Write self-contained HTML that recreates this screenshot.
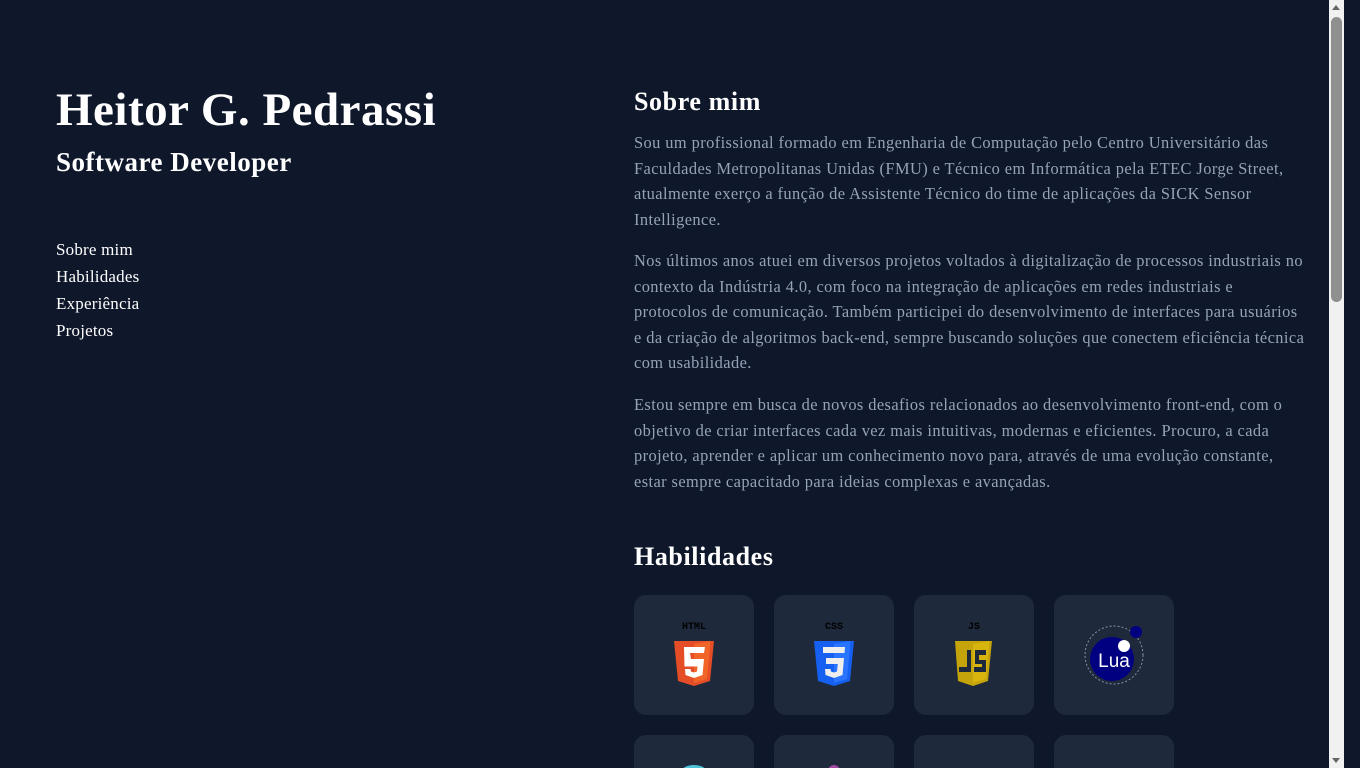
<!DOCTYPE html>
<html><head><meta charset="utf-8"><style>
html,body{margin:0;padding:0;background:#0f172a;overflow:hidden;width:1360px;height:768px}
body{position:relative;font-family:"Liberation Serif",serif;color:#fff}
.a{position:absolute;white-space:nowrap}
h1{position:absolute;left:56px;top:83px;margin:0;font-size:47px;font-weight:bold;letter-spacing:0.5px;white-space:nowrap}
.sub{left:56px;top:147px;font-size:27px;font-weight:bold;letter-spacing:0.5px}
.nav{left:56px;font-size:17px;letter-spacing:0.2px}
.p{left:634px;font-size:16.4px;line-height:25.6px;color:#94a3b8;letter-spacing:0.42px}
.h{left:634px;font-size:26px;font-weight:bold;letter-spacing:0.6px}
.card{position:absolute;width:120px;height:120px;background:#1e293b;border-radius:12px;overflow:hidden}
.sb{position:absolute;left:1329px;top:0;width:15px;height:768px;background:#f1f1f1}
</style></head><body>
<h1>Heitor G. Pedrassi</h1>
<div class="a sub">Software Developer</div>
<div class="a nav" style="top:240px">Sobre mim</div>
<div class="a nav" style="top:267px">Habilidades</div>
<div class="a nav" style="top:294px">Experiência</div>
<div class="a nav" style="top:321px">Projetos</div>

<div class="a h" style="top:87px">Sobre mim</div>
<div class="a p" style="top:130px">Sou um profissional formado em Engenharia de Computação pelo Centro Universitário das<br>Faculdades Metropolitanas Unidas (FMU) e Técnico em Informática pela ETEC Jorge Street,<br>atualmente exerço a função de Assistente Técnico do time de aplicações da SICK Sensor<br>Intelligence.</div>
<div class="a p" style="top:248px">Nos últimos anos atuei em diversos projetos voltados à digitalização de processos industriais no<br>contexto da Indústria 4.0, com foco na integração de aplicações em redes industriais e<br>protocolos de comunicação. Também participei do desenvolvimento de interfaces para usuários<br>e da criação de algoritmos back-end, sempre buscando soluções que conectem eficiência técnica<br>com usabilidade.</div>
<div class="a p" style="top:392px">Estou sempre em busca de novos desafios relacionados ao desenvolvimento front-end, com o<br>objetivo de criar interfaces cada vez mais intuitivas, modernas e eficientes. Procuro, a cada<br>projeto, aprender e aplicar um conhecimento novo para, através de uma evolução constante,<br>estar sempre capacitado para ideias complexas e avançadas.</div>
<div class="a h" style="top:542px">Habilidades</div>

<div class="card" style="left:634px;top:595px"><svg width="120" height="120"><text x="60" y="34" font-size="10" font-weight="bold" text-anchor="middle" font-family="Liberation Mono" fill="#000">HTML</text><path d="M40 46h40l-4 40-16 5-16-5z" fill="#e44d26"/><path d="M60 49v39l13-4 3.5-38z" fill="#f16529"/><path d="M50 52h21l-1 6h-14l1 6h13l-1.5 16-8.5 3-8.5-3-.5-6h5.5l.5 2.5 3 1 3-1 .5-5h-13z" fill="#fff"/></svg></div>
<div class="card" style="left:774px;top:595px"><svg width="120" height="120"><text x="60" y="34" font-size="10" font-weight="bold" text-anchor="middle" font-family="Liberation Mono" fill="#000">CSS</text><path d="M40 46h40l-4 40-16 5-16-5z" fill="#1560f0"/><path d="M60 49v39l13-4 3.5-38z" fill="#2a75ff"/><path d="M49 52h22l-.5 6H49zM52 63h18l-.5 6H52zM69.5 69l-1 11-8.5 3-8.5-3-.5-6h5.5l.5 2.5 3 1 3-1 .8-7.5z" fill="#eee"/></svg></div>
<div class="card" style="left:914px;top:595px"><svg width="120" height="120"><text x="60" y="34" font-size="10" font-weight="bold" text-anchor="middle" font-family="Liberation Mono" fill="#000">JS</text><path d="M41 46h37l-4 40-15 5-15-5z" fill="#c4a30b"/><path d="M59 49v39l13-4 3.5-38z" fill="#d7b50e"/><path d="M53 55h4v22h-12v-5h8zM61 55h11v5h-7v5h7v12h-12v-5h8v-3h-7z" fill="#1e293b"/></svg></div>
<div class="card" style="left:1054px;top:595px"><svg width="120" height="120"><circle cx="60" cy="60" r="29" fill="none" stroke="#8a8fa0" stroke-dasharray="2 2"/><circle cx="58" cy="64" r="22" fill="#000080"/><circle cx="82" cy="37" r="6" fill="#000080"/><circle cx="70" cy="51" r="6" fill="#fff"/><text x="60" y="72" font-size="19" text-anchor="middle" font-family="Liberation Sans" fill="#fff">Lua</text></svg></div>
<div class="card" style="left:634px;top:735px;height:33px;border-radius:12px 12px 0 0"><svg width="120" height="33"><ellipse cx="60" cy="36" rx="12" ry="6" fill="#4fc3d9"/></svg></div>
<div class="card" style="left:774px;top:735px;height:33px;border-radius:12px 12px 0 0"><svg width="120" height="33"><ellipse cx="60" cy="36" rx="6" ry="6" fill="#a04ba0"/></svg></div>
<div class="card" style="left:914px;top:735px;height:33px;border-radius:12px 12px 0 0"></div>
<div class="card" style="left:1054px;top:735px;height:33px;border-radius:12px 12px 0 0"></div>
<div class="sb"><div style="position:absolute;left:2px;top:17px;width:11px;height:285px;background:#8f8f8f;border-radius:6px"></div><div style="position:absolute;left:3px;top:5px;border-left:4.5px solid transparent;border-right:4.5px solid transparent;border-bottom:5px solid #666"></div><div style="position:absolute;left:3px;bottom:5px;border-left:4.5px solid transparent;border-right:4.5px solid transparent;border-top:5px solid #666"></div></div>
</body></html>
